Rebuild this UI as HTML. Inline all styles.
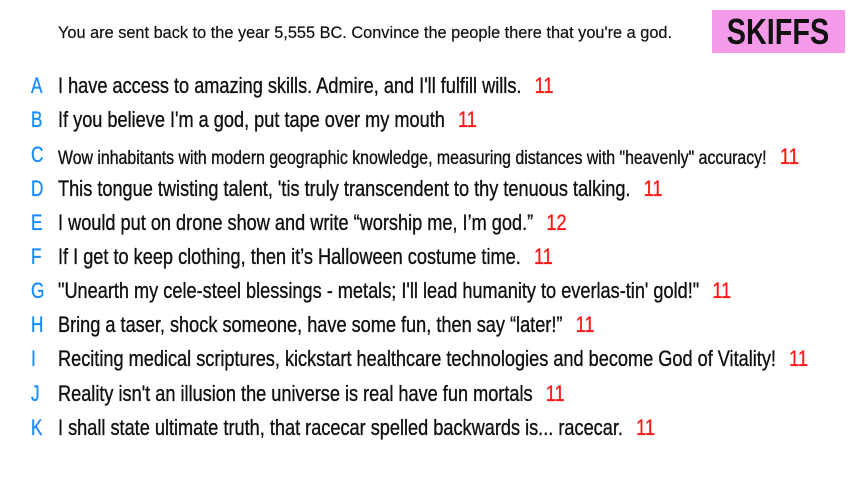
<!DOCTYPE html>
<html><head><meta charset="utf-8"><style>
html,body{margin:0;padding:0;background:#fff;width:853px;height:480px;overflow:hidden}
body{position:relative;font-family:"Liberation Sans Narrow","Liberation Sans",sans-serif;color:#111}
.hdr{position:absolute;left:58px;top:23px;font-size:17px;white-space:nowrap;font-family:"Liberation Sans",sans-serif;transform:scaleX(0.96);transform-origin:left;-webkit-text-stroke:0.2px #111}
.logo{position:absolute;left:712px;top:10px;width:133px;height:43px;background:#f59ae8;font-size:36px;font-weight:bold;text-align:center;line-height:44px;color:#111}
.logo span{display:inline-block;transform:scaleX(0.8)}
.row{position:absolute;left:0;height:30px;white-space:nowrap;font-size:22px;-webkit-text-stroke:0.35px currentColor}
.l{position:absolute;left:31px;color:#1a8cff;transform:scaleX(0.78);transform-origin:left}
.t{position:absolute;left:58px;transform:scaleX(0.825);transform-origin:left}
.n{color:#ff1a1a;margin-left:16px}
</style></head><body>
<div class="hdr">You are sent back to the year 5,555 BC. Convince the people there that you're a god.</div>
<div class="logo"><span>SKIFFS</span></div>
<div class="row" style="top:73px"><span class="l">A</span><span class="t">I have access to amazing skills. Admire, and I'll fulfill wills.<span class="n">11</span></span></div>
<div class="row" style="top:107px"><span class="l">B</span><span class="t">If you believe I'm a god, put tape over my mouth<span class="n">11</span></span></div>
<div class="row" style="top:142px"><span class="l">C</span><span class="t" style="font-size:19px;top:2px;transform:scaleX(0.835)">Wow inhabitants with modern geographic knowledge, measuring distances with "heavenly" accuracy!<span class="n" style="font-size:22px">11</span></span></div>
<div class="row" style="top:176px"><span class="l">D</span><span class="t">This tongue twisting talent, 'tis truly transcendent to thy tenuous talking.<span class="n">11</span></span></div>
<div class="row" style="top:210px"><span class="l">E</span><span class="t">I would put on drone show and write “worship me, I’m god.”<span class="n">12</span></span></div>
<div class="row" style="top:244px"><span class="l">F</span><span class="t">If I get to keep clothing, then it’s Halloween costume time.<span class="n">11</span></span></div>
<div class="row" style="top:278px"><span class="l">G</span><span class="t">"Unearth my cele-steel blessings - metals; I'll lead humanity to everlas-tin' gold!"<span class="n">11</span></span></div>
<div class="row" style="top:312px"><span class="l">H</span><span class="t">Bring a taser, shock someone, have some fun, then say “later!”<span class="n">11</span></span></div>
<div class="row" style="top:346px"><span class="l">I</span><span class="t">Reciting medical scriptures, kickstart healthcare technologies and become God of Vitality!<span class="n">11</span></span></div>
<div class="row" style="top:381px"><span class="l">J</span><span class="t">Reality isn't an illusion the universe is real have fun mortals<span class="n">11</span></span></div>
<div class="row" style="top:415px"><span class="l">K</span><span class="t">I shall state ultimate truth, that racecar spelled backwards is... racecar.<span class="n">11</span></span></div>
</body></html>
